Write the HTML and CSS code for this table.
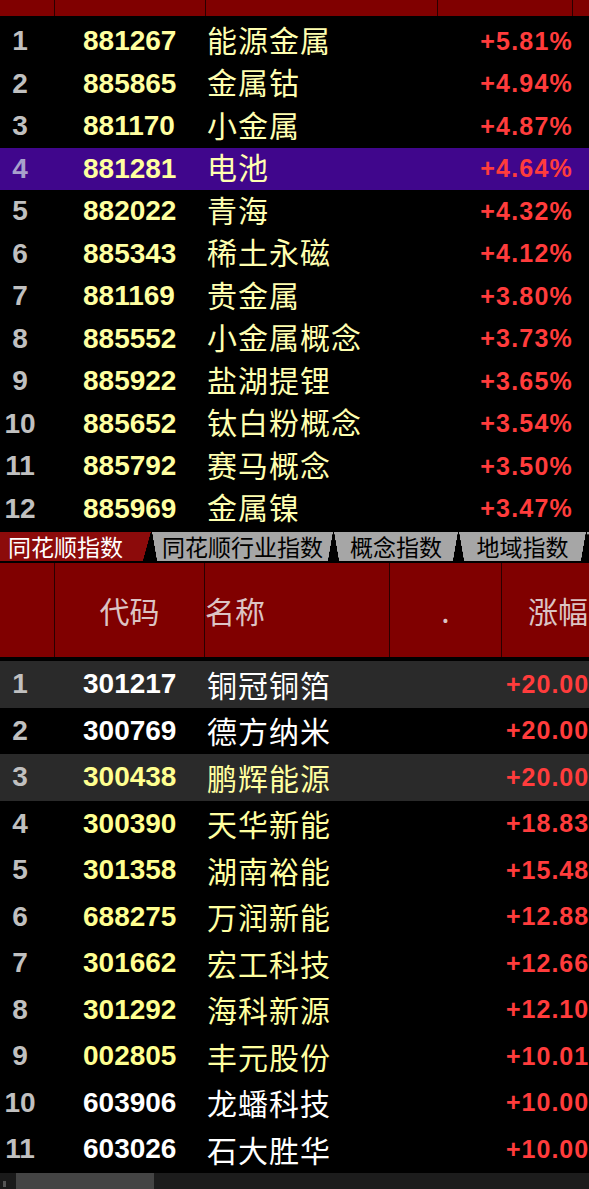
FILE: index.html
```html
<!DOCTYPE html>
<html lang="zh-CN">
<head>
<meta charset="utf-8">
<title>同花顺指数</title>
<link rel="stylesheet" href="styles.css">
</head>
<body>
<div class="screen">
  <div class="hdr1">
    <div class="hc"></div><div class="hc"></div><div class="hc"></div><div class="hc"></div><div class="hc last"></div>
  </div>
  <div class="t1">
    <div class="row"><span class="idx">1</span><span class="code">881267</span><span class="name">能源金属</span><span class="pct">+5.81%</span></div>
    <div class="row"><span class="idx">2</span><span class="code">885865</span><span class="name">金属钴</span><span class="pct">+4.94%</span></div>
    <div class="row"><span class="idx">3</span><span class="code">881170</span><span class="name">小金属</span><span class="pct">+4.87%</span></div>
    <div class="row sel"><span class="idx">4</span><span class="code">881281</span><span class="name">电池</span><span class="pct">+4.64%</span></div>
    <div class="row"><span class="idx">5</span><span class="code">882022</span><span class="name">青海</span><span class="pct">+4.32%</span></div>
    <div class="row"><span class="idx">6</span><span class="code">885343</span><span class="name">稀土永磁</span><span class="pct">+4.12%</span></div>
    <div class="row"><span class="idx">7</span><span class="code">881169</span><span class="name">贵金属</span><span class="pct">+3.80%</span></div>
    <div class="row"><span class="idx">8</span><span class="code">885552</span><span class="name">小金属概念</span><span class="pct">+3.73%</span></div>
    <div class="row"><span class="idx">9</span><span class="code">885922</span><span class="name">盐湖提锂</span><span class="pct">+3.65%</span></div>
    <div class="row"><span class="idx">10</span><span class="code">885652</span><span class="name">钛白粉概念</span><span class="pct">+3.54%</span></div>
    <div class="row"><span class="idx">11</span><span class="code">885792</span><span class="name">赛马概念</span><span class="pct">+3.50%</span></div>
    <div class="row"><span class="idx">12</span><span class="code">885969</span><span class="name">金属镍</span><span class="pct">+3.47%</span></div>
  </div>
  <div class="tabs">
    <div class="tab active t-a">同花顺指数</div>
    <div class="tab t-b">同花顺行业指数</div>
    <div class="tab t-c">概念指数</div>
    <div class="tab t-d">地域指数</div>
    <div class="tab t-e"></div>
  </div>
  <div class="hdr2">
    <div class="h2c"></div>
    <div class="h2c center">代码</div>
    <div class="h2c">名称</div>
    <div class="h2c center">.</div>
    <div class="h2c pad">涨幅</div>
  </div>
  <div class="t2">
    <div class="row2 alt white"><span class="idx">1</span><span class="code">301217</span><span class="name">铜冠铜箔</span><span class="pct">+20.00%</span></div>
    <div class="row2 white"><span class="idx">2</span><span class="code">300769</span><span class="name">德方纳米</span><span class="pct">+20.00%</span></div>
    <div class="row2 alt"><span class="idx">3</span><span class="code">300438</span><span class="name">鹏辉能源</span><span class="pct">+20.00%</span></div>
    <div class="row2"><span class="idx">4</span><span class="code">300390</span><span class="name">天华新能</span><span class="pct">+18.83%</span></div>
    <div class="row2"><span class="idx">5</span><span class="code">301358</span><span class="name">湖南裕能</span><span class="pct">+15.48%</span></div>
    <div class="row2"><span class="idx">6</span><span class="code">688275</span><span class="name">万润新能</span><span class="pct">+12.88%</span></div>
    <div class="row2"><span class="idx">7</span><span class="code">301662</span><span class="name">宏工科技</span><span class="pct">+12.66%</span></div>
    <div class="row2"><span class="idx">8</span><span class="code">301292</span><span class="name">海科新源</span><span class="pct">+12.10%</span></div>
    <div class="row2"><span class="idx">9</span><span class="code">002805</span><span class="name">丰元股份</span><span class="pct">+10.01%</span></div>
    <div class="row2 white"><span class="idx">10</span><span class="code">603906</span><span class="name">龙蟠科技</span><span class="pct">+10.00%</span></div>
    <div class="row2 white"><span class="idx">11</span><span class="code">603026</span><span class="name">石大胜华</span><span class="pct">+10.00%</span></div>
  </div>
  <div class="scroll">
    <div class="sc-arrow"><span class="sc-mark"></span></div>
    <div class="sc-thumb"></div>
  </div>
</div>
</body>
</html>
```

FILE: styles.css
```css
html, body {
  margin: 0;
  padding: 0;
  background: #000;
}
.screen {
  width: 589px;
  height: 1189px;
  overflow: hidden;
  background: #000;
}
.hdr1 {
  display: grid;
  grid-template-columns: 55px 151px 232px 135px 1fr;
  height: 16px;
  background: #800000;
  margin-bottom: 4px;
}
.hc {
  border-right: 1px solid #2a0000;
}
.hc.last { border-right: 0; }

.row, .row2 {
  display: flex;
  align-items: center;
  white-space: nowrap;
}
.row { height: 42.5px; }
.row2 { height: 46.5px; }

.idx {
  flex: none;
  width: 40px;
  text-align: center;
  color: #c0c0c0;
  font: bold 28px "Liberation Sans", Arial, sans-serif;
}
.code {
  flex: none;
  width: 124px;
  margin-left: 43px;
  color: #ffffa0;
  font: bold 28px "Liberation Sans", Arial, sans-serif;
}
.name {
  flex: 1;
  color: #ffffb0;
  font: 30px "Noto Sans CJK SC", sans-serif;
  letter-spacing: 1px;
  line-height: 1.25;
}
.row .name { padding-bottom: 4px; }
.pct {
  flex: none;
  color: #ff3c3c;
  font: bold 25px "Liberation Sans", Arial, sans-serif;
  letter-spacing: 1.2px;
  padding-right: 16px;
}
.row.sel { background: #40068c; }
.row.sel .idx { color: #a8a0cc; }

.tabs {
  display: flex;
  height: 29px;
  margin: 2px 0;
  gap: 1px;
}
.tab {
  flex: none;
  box-sizing: border-box;
  height: 29px;
  text-align: center;
  color: #000;
  font: 23px "Noto Sans CJK SC", sans-serif;
  line-height: 29px;
  white-space: nowrap;
  background:
    linear-gradient(to top right, #000 50%, transparent 52%) left bottom / 5px 100% no-repeat,
    linear-gradient(to top left, #000 50%, transparent 52%) right bottom / 5px 100% no-repeat,
    #a6a6a6;
}
.tab.active {
  color: #fff;
  text-align: left;
  padding-left: 8px;
  background:
    linear-gradient(to top left, #000 50%, transparent 52%) right bottom / 8px 100% no-repeat,
    #8c0b0b;
}
.t-a { width: 151px; }
.t-b { width: 181px; }
.t-c { width: 124px; }
.t-d { width: 127px; }
.t-e { flex: 1; min-width: 0; }

.hdr2 {
  display: grid;
  grid-template-columns: 55px 150px 185px 112px 1fr;
  height: 94px;
  background: #800000;
  margin-bottom: 4px;
}
.h2c {
  border-right: 1px solid #2a0000;
  color: #dcc4c4;
  font: 30px "Noto Sans CJK SC", sans-serif;
  line-height: 94px;
  white-space: nowrap;
}
.h2c.center { text-align: center; }
.h2c.pad { padding-left: 26px; border-right: 0; }

.row2.alt { background: #2a2a2a; }
.row2 .name { flex: none; width: 299px; }
.row2 .pct { padding-right: 0; letter-spacing: 1px; }
.row2 .code { color: #ffff90; }
.row2 .name { color: #ffffa0; }
.row2.white .code, .row2.white .name { color: #fff; }

.scroll {
  display: flex;
  height: 17px;
  background: #1c1c1c;
}
.sc-arrow {
  width: 16px;
  background: #1a1a1a;
  display: flex;
  align-items: flex-end;
  padding-left: 3px;
  box-sizing: border-box;
}
.sc-mark {
  width: 3px;
  height: 6px;
  background: #555;
  margin-bottom: 3px;
}
.sc-thumb {
  width: 138px;
  background: #444;
}
```
